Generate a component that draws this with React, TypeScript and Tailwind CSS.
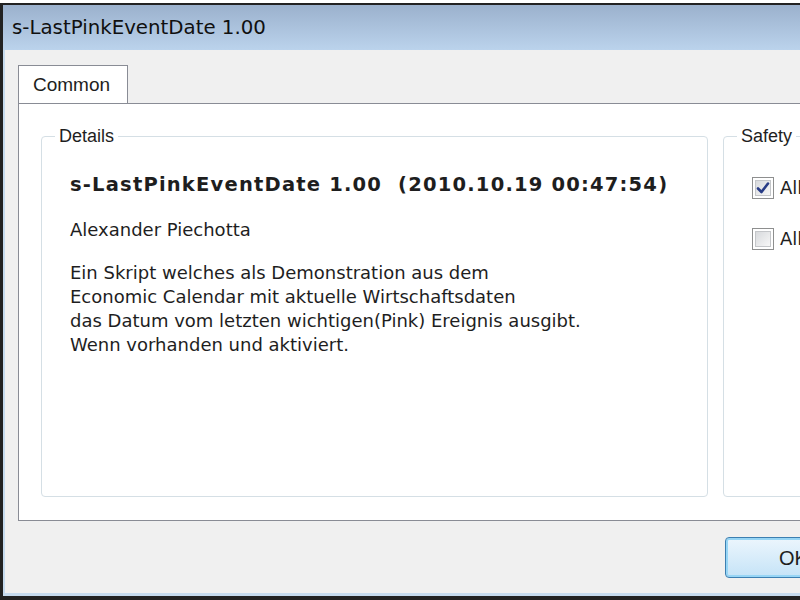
import React from 'react';

const font = { fontFamily: '"Liberation Sans", Arial, sans-serif' };
const wide = { fontFamily: '"DejaVu Sans", Verdana, sans-serif' };

function Check({ checked }: { checked?: boolean }) {
  return (
    <div className="flex h-[22px] w-[22px] shrink-0 items-center justify-center border border-[#8e8f8f] bg-white">
      <div className="flex h-[16px] w-[16px] items-center justify-center border border-[#c4c6c9] bg-gradient-to-br from-[#d8dadd] to-[#f7f7f7]">
        {checked ? (
          <svg width="14" height="14" viewBox="0 0 14 14">
            <path d="M2 7.5 L5.5 11 L12 2.5" fill="none" stroke="#283c86" strokeWidth="2.6" strokeLinecap="round" strokeLinejoin="round" />
          </svg>
        ) : null}
      </div>
    </div>
  );
}

export default function App() {
  return (
    <div className="flex h-[600px] w-[800px] flex-col overflow-hidden bg-white pt-[3px] text-[#1e1e1e]" style={font}>
      <div className="flex flex-1 flex-col overflow-hidden border-l-[3px] border-t-2 border-b-[4px] border-[#222]">
        <div className="flex h-[45px] items-center bg-gradient-to-b from-[#9bb1cd] to-[#bbd3ec] pl-[9px] text-[19.8px] text-[#101010]" style={wide}>
          s-LastPinkEventDate 1.00
        </div>
        <div className="flex flex-1 flex-col border-b-[3px] border-l-2 border-[#c6dbee] bg-[#f0f0f0] pl-[13px] pt-[15px]">
          <div className="flex">
            <div className="flex h-[39px] w-[110px] items-center border border-b-0 border-[#898c95] bg-white pl-[14px] text-[19px]">
              Common
            </div>
          </div>
          <div className="-mt-px flex h-[418px] gap-[15px] overflow-hidden border-y border-l border-[#898c95] bg-white pl-[22px] pt-[22px] pb-[14px]">
            <fieldset className="h-[371px] w-[667px] shrink-0 rounded-[4px] border border-[#d5dfe5] pl-[28px] pr-4">
              <legend className="ml-[-15px] px-[4px] text-[18px] leading-[20px]">Details</legend>
              <div className="mt-[27px] text-[19.5px] font-bold leading-[24px] tracking-[1.2px] whitespace-pre" style={wide}>
                {'s-LastPinkEventDate 1.00  (2010.10.19 00:47:54)'}
              </div>
              <div className="mt-[21px] text-[18px] leading-[24px]" style={wide}>Alexander Piechotta</div>
              <div className="mt-[19px] text-[18px] leading-[24px]" style={wide}>
                <div>Ein Skript welches als Demonstration aus dem</div>
                <div>Economic Calendar mit aktuelle Wirtschaftsdaten</div>
                <div>das Datum vom letzten wichtigen(Pink) Ereignis ausgibt.</div>
                <div>Wenn vorhanden und aktiviert.</div>
              </div>
            </fieldset>
            <fieldset className="h-[371px] w-[300px] shrink-0 rounded-[4px] border border-[#d5dfe5] pl-[28px]">
              <legend className="ml-[-15px] px-[4px] text-[18px] leading-[20px]">Safety</legend>
              <div className="mt-[28px] flex items-center gap-[6px] whitespace-nowrap text-[18px]" style={wide}>
                <Check checked />
                <span>Allow DLL imports</span>
              </div>
              <div className="mt-[24px] flex items-center gap-[6px] whitespace-nowrap text-[18px]" style={wide}>
                <Check />
                <span>Allow external experts</span>
              </div>
            </fieldset>
          </div>
          <div className="flex flex-1 justify-end overflow-hidden pt-[16px]">
            <div className="mr-[-45px] flex h-[41px] w-[120px] shrink-0 items-center justify-start rounded-[4px] border border-[#3c7fb1] bg-gradient-to-b from-[#ecf6fd] to-[#c5e3f7] pl-[53px] text-[20px] shadow-[inset_0_0_0_2px_#97d5f5]">
              OK
            </div>
          </div>
        </div>
      </div>
    </div>
  );
}
